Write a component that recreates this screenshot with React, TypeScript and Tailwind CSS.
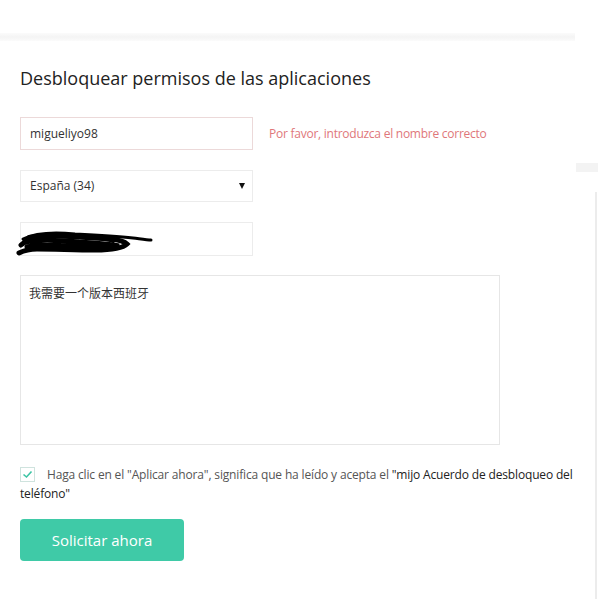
const font = { fontFamily: '"Open Sans", "Noto Sans CJK SC", sans-serif' }

function Scribble() {
  return (
    <svg
      className="absolute left-[-6px] top-[4px]"
      width="140"
      height="30"
      viewBox="0 0 140 30"
      fill="none"
    >
      <path
        d="M8 12 C20 6 40 5 60 7 C80 8 100 9 118 11 C126 12 132 13 136 13"
        stroke="#000"
        strokeWidth="3"
        strokeLinecap="round"
      />
      <path
        d="M6 18 C16 9 30 8 46 9 C62 10 78 11 96 12 C104 13 110 15 112 17 C108 21 96 23 80 23 C60 23 40 22 22 22 C14 22 8 24 4 26"
        stroke="#000"
        strokeWidth="5"
        strokeLinecap="round"
      />
      <path
        d="M10 15 C24 12 44 13 64 15 C82 16 96 17 104 19 C90 21 70 20 50 19 C34 18 20 18 12 20"
        stroke="#000"
        strokeWidth="5"
        strokeLinecap="round"
      />
      <path
        d="M14 10 C30 8 50 9 72 10 C86 11 94 12 98 14"
        stroke="#000"
        strokeWidth="4"
        strokeLinecap="round"
      />
    </svg>
  )
}

export default function App() {
  return (
    <div className="relative min-h-[599px] w-[609px] overflow-hidden bg-white text-[#333]" style={font}>
      <div className="mt-[33px] h-[8px] w-[575px] bg-gradient-to-b from-[#fbfbfb] via-[#f4f4f4] to-[#fbfbfb]" />

      {/* right edge fragments */}
      <div className="absolute left-[576px] top-[163px] h-[9px] w-[22px] bg-[#f3f3f3]" />
      <div className="absolute left-[595px] top-[192px] h-[420px] w-[2px] bg-[#ececec]" />

      <div className="px-5">
        <h1 className="mt-[24px] text-[18px] leading-[26px] text-[#222]">
          Desbloquear permisos de las aplicaciones
        </h1>

        <div className="mt-[26px] flex items-center gap-4">
          <div className="flex h-[33px] w-[233px] items-center border border-[#ecd9d9] px-[9px] text-[12px] text-[#333]">
            migueliyo98
          </div>
          <span className="text-[12px] tracking-[-0.25px] text-[#e0777a]">
            Por favor, introduzca el nombre correcto
          </span>
        </div>

        <div className="mt-[20px] flex h-[32px] w-[233px] items-center justify-between border border-[#ececec] pl-[9px] pr-[7px] text-[12px] text-[#333]">
          <span>España (34)</span>
          <svg width="6" height="6" viewBox="0 0 6 6">
            <path d="M0 0 H6 L3 6 Z" fill="#111" />
          </svg>
        </div>

        <div className="relative mt-[20px] h-[34px] w-[233px] border border-[#ececec]">
          <Scribble />
        </div>

        <div className="mt-[19px] h-[170px] w-[480px] border border-[#e6e6e6] px-[8px] pt-[9px] text-[12px] text-[#333]">
          我需要一个版本西班牙
        </div>

        <div className="mt-[20px] w-[556px] text-[12px] leading-[19px] tracking-[-0.16px] text-[#555]">
          <span className="mr-[12px] inline-flex h-[15px] w-[15px] -translate-y-[1px] items-center justify-center border border-[#cfe3de] bg-white align-middle">
            <svg width="11" height="9" viewBox="0 0 11 9" fill="none">
              <path d="M1.5 4.5 L4.5 7 L9.5 1.5" stroke="#3cc4a4" strokeWidth="1.6" />
            </svg>
          </span>
          Haga clic en el "Aplicar ahora", significa que ha leído y acepta el{' '}
          <span className="text-[#222]">"mijo Acuerdo de desbloqueo del teléfono"</span>
        </div>

        <button className="mt-[16px] h-[42px] w-[164px] rounded-[4px] bg-[#3fcaa7] text-[15px] text-white">
          Solicitar ahora
        </button>
      </div>
    </div>
  )
}
